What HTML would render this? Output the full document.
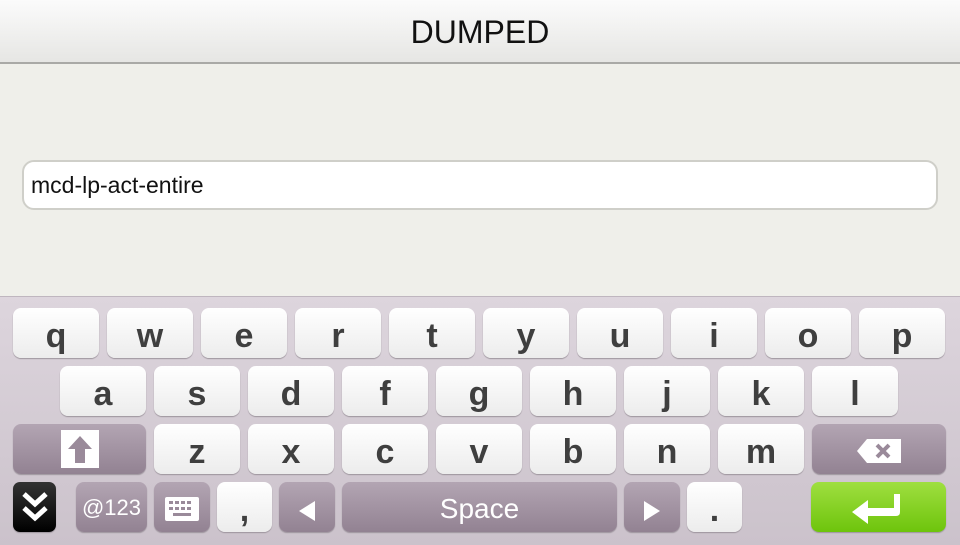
<!DOCTYPE html><html><head><style>
body{margin:0;width:960px;height:544px;overflow:hidden;font-family:"Liberation Sans",sans-serif;background:#efefea;position:relative}
.hdr{position:absolute;left:0;top:0;width:960px;height:62px;background:linear-gradient(#fbfbfb,#e6e6e4);border-bottom:2px solid #a9a9a6;text-align:center;line-height:64px;font-size:32px;color:#111}
.inp{position:absolute;left:22px;top:160px;width:905px;height:46px;border:2px solid #cfcfc9;border-radius:12px;background:#fff;font-size:23px;line-height:47px;padding-left:7px;color:#111}
.kb{position:absolute;left:0;top:296px;width:960px;height:248px;background:linear-gradient(#ddd5dd,#cbc2cb);border-top:1px solid #bfb6bf}
.k{position:absolute;height:50px;border-radius:8px;background:linear-gradient(#fff,#ececec);box-shadow:0 1px 1px #9c949c;text-align:center;line-height:56px;font-size:34px;color:#3f3f3f;font-weight:bold}
.d{background:linear-gradient(#b3a5b3,#928292);color:#fff}
.g{background:linear-gradient(#9fdf40,#6ec40c);}
</style></head><body>
<div class="hdr">DUMPED</div>
<div class="inp">mcd-lp-act-entire</div>
<div class="kb"></div>
<div class="k" style="left:13px;top:308px;width:86px">q</div>
<div class="k" style="left:107px;top:308px;width:86px">w</div>
<div class="k" style="left:201px;top:308px;width:86px">e</div>
<div class="k" style="left:295px;top:308px;width:86px">r</div>
<div class="k" style="left:389px;top:308px;width:86px">t</div>
<div class="k" style="left:483px;top:308px;width:86px">y</div>
<div class="k" style="left:577px;top:308px;width:86px">u</div>
<div class="k" style="left:671px;top:308px;width:86px">i</div>
<div class="k" style="left:765px;top:308px;width:86px">o</div>
<div class="k" style="left:859px;top:308px;width:86px">p</div>
<div class="k" style="left:60px;top:366px;width:86px">a</div>
<div class="k" style="left:154px;top:366px;width:86px">s</div>
<div class="k" style="left:248px;top:366px;width:86px">d</div>
<div class="k" style="left:342px;top:366px;width:86px">f</div>
<div class="k" style="left:436px;top:366px;width:86px">g</div>
<div class="k" style="left:530px;top:366px;width:86px">h</div>
<div class="k" style="left:624px;top:366px;width:86px">j</div>
<div class="k" style="left:718px;top:366px;width:86px">k</div>
<div class="k" style="left:812px;top:366px;width:86px">l</div>
<div class="k d" style="left:13px;top:424px;width:133px"><svg width="38" height="38" viewBox="0 0 38 38" style="margin-top:6px"><rect width="38" height="38" fill="#fff"/><path d="M19 6 L31 19 H24 V33 H14 V19 H7 Z" fill="#9a8a9a"/></svg></div>
<div class="k" style="left:154px;top:424px;width:86px">z</div>
<div class="k" style="left:248px;top:424px;width:86px">x</div>
<div class="k" style="left:342px;top:424px;width:86px">c</div>
<div class="k" style="left:436px;top:424px;width:86px">v</div>
<div class="k" style="left:530px;top:424px;width:86px">b</div>
<div class="k" style="left:624px;top:424px;width:86px">n</div>
<div class="k" style="left:718px;top:424px;width:86px">m</div>
<div class="k d" style="left:812px;top:424px;width:134px"><svg width="44" height="24" viewBox="0 0 44 24" style="margin-top:14px"><path d="M10 0 H44 V24 H10 L0 12 Z" fill="#fff"/><path d="M20 6 L32 18 M32 6 L20 18" stroke="#9a8a9a" stroke-width="4"/></svg></div>
<div class="k" style="left:13px;top:482px;width:43px;background:linear-gradient(#333,#000);border-radius:7px"><svg width="28" height="34" viewBox="0 0 28 34" style="margin-top:8px"><path d="M3 4 L14 14 L25 4 M3 18 L14 28 L25 18" stroke="#fff" stroke-width="5" fill="none"/></svg></div>
<div class="k d" style="left:76px;top:482px;width:71px;font-size:22px;font-weight:normal;line-height:52px">@123</div>
<div class="k d" style="left:154px;top:482px;width:56px"><svg width="34" height="24" viewBox="0 0 34 24" style="margin-top:14px"><rect width="34" height="24" rx="2" fill="#fff"/><g fill="#9a8a9a"><rect x="4" y="4" width="4" height="3"/><rect x="10" y="4" width="4" height="3"/><rect x="16" y="4" width="4" height="3"/><rect x="22" y="4" width="4" height="3"/><rect x="4" y="10" width="4" height="3"/><rect x="10" y="10" width="4" height="3"/><rect x="16" y="10" width="4" height="3"/><rect x="22" y="10" width="4" height="3"/><rect x="8" y="16" width="18" height="3"/></g></svg></div>
<div class="k" style="left:217px;top:482px;width:55px">,</div>
<div class="k d" style="left:279px;top:482px;width:56px"><svg width="16" height="20" style="margin-top:16px"><path d="M16 0 V20 L0 10Z" fill="#fff"/></svg></div>
<div class="k d" style="left:342px;top:482px;width:275px;font-size:28px;font-weight:normal;line-height:54px">Space</div>
<div class="k d" style="left:624px;top:482px;width:56px"><svg width="16" height="20" style="margin-top:16px"><path d="M0 0 V20 L16 10Z" fill="#fff"/></svg></div>
<div class="k" style="left:687px;top:482px;width:55px">.</div>
<div class="k g" style="left:811px;top:482px;width:135px"><svg width="54" height="30" viewBox="0 0 54 30" style="margin-top:12px"><path d="M48 0 V18 Q48 22 44 22 H16 V30 L0 18 L16 6 V14 H42 V0 Z" fill="#fff"/></svg></div>
</body></html>
